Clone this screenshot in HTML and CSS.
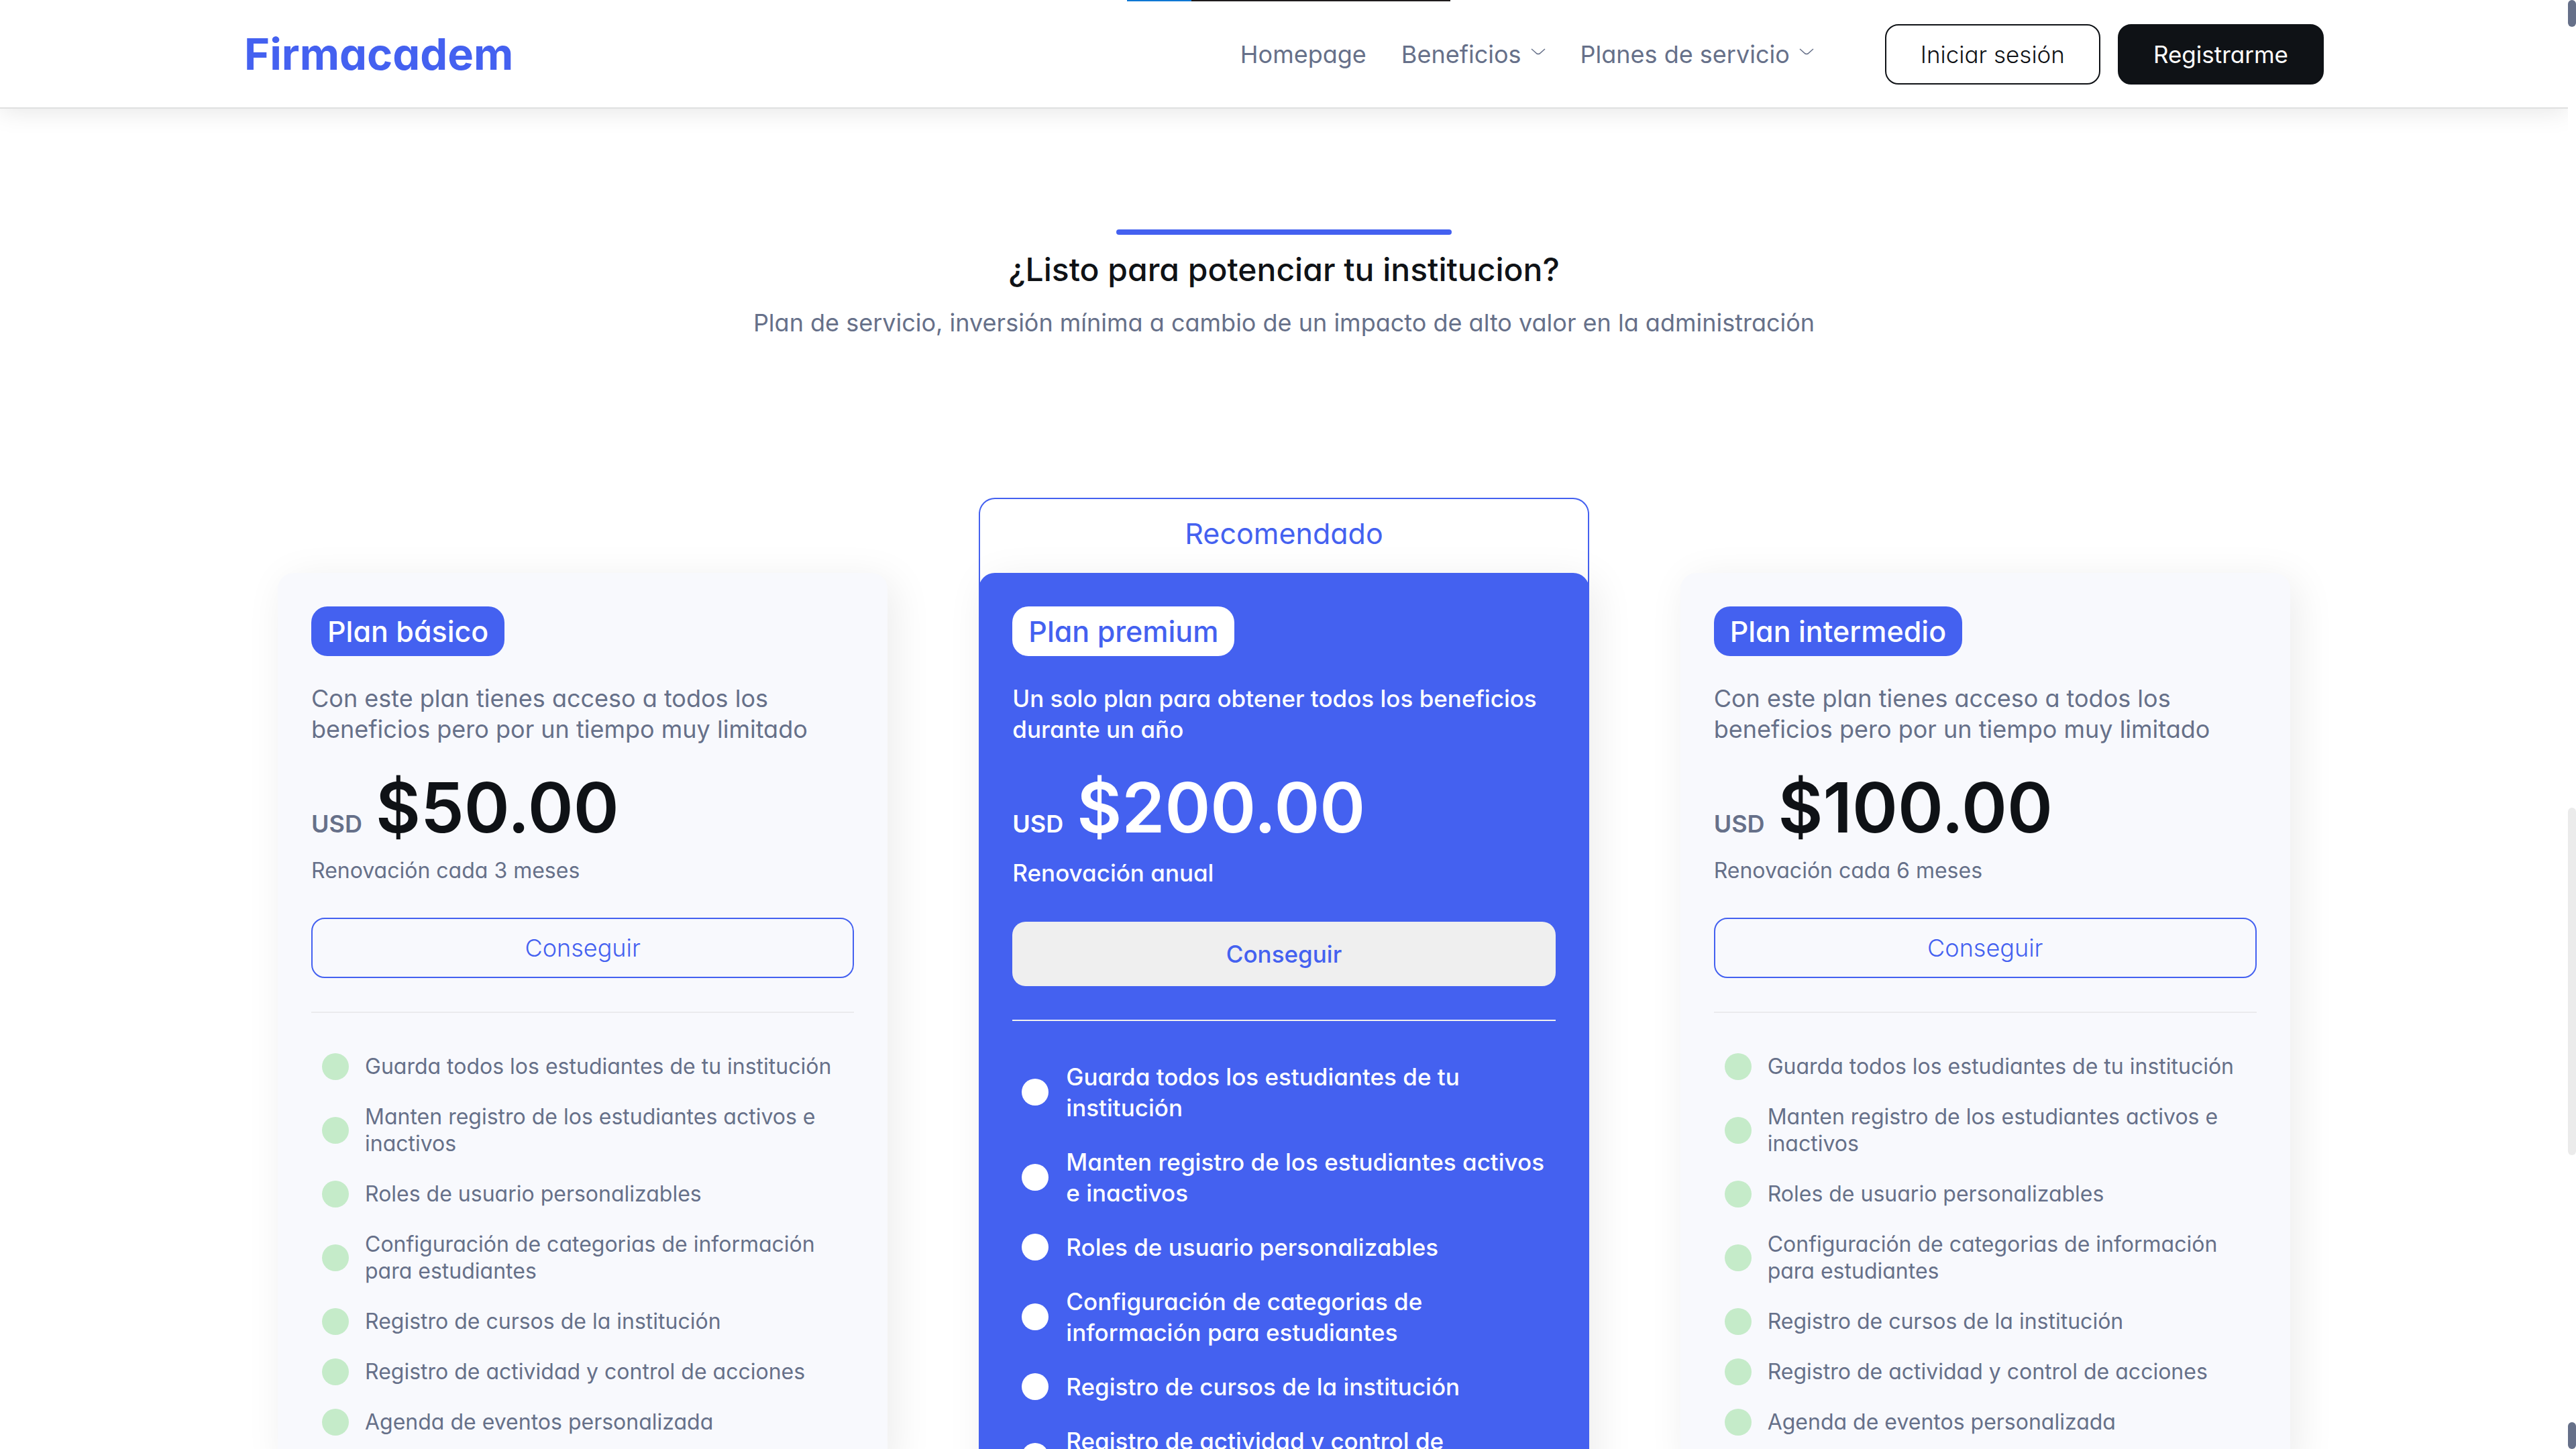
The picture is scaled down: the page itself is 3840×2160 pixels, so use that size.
FILE: index.html
```html
<!DOCTYPE html>
<html lang="es">
<head>
<meta charset="utf-8">
<meta name="viewport" content="width=device-width, initial-scale=1">
<title>Firmacadem</title>
<link rel="stylesheet" href="styles.css">
</head>
<body>
<header class="header">
  <div class="header__inner">
    <a class="logo" href="#">Firmacadem</a>
    <nav class="nav">
      <a class="nav__link" href="#">Homepage</a>
      <a class="nav__link" href="#">Beneficios
        <svg class="chevron" viewBox="0 0 22 10" aria-hidden="true"><path d="M1 1L9 8Q11 9 13 8L21 1"/></svg>
      </a>
      <a class="nav__link" href="#">Planes de servicio
        <svg class="chevron" viewBox="0 0 22 10" aria-hidden="true"><path d="M1 1L9 8Q11 9 13 8L21 1"/></svg>
      </a>
    </nav>
    <div class="actions">
      <button class="btn btn--outline" type="button">Iniciar sesión</button>
      <button class="btn btn--dark" type="button">Registrarme</button>
    </div>
  </div>
</header>

<main class="pricing">
  <div class="intro">
    <span class="intro__bar"></span>
    <h2 class="intro__title">¿Listo para potenciar tu institucion?</h2>
    <p class="intro__text">Plan de servicio, inversión mínima a cambio de un impacto de alto valor en la administración</p>
  </div>

  <div class="plans">
    <article class="plan">
      <h3 class="plan__name">Plan básico</h3>
      <p class="plan__text">Con este plan tienes acceso a todos los beneficios pero por un tiempo muy limitado</p>
      <p class="price"><span class="price__currency">USD</span><span class="price__amount">$50.00</span></p>
      <p class="plan__renewal">Renovación cada 3 meses</p>
      <button class="plan__button" type="button">Conseguir</button>
      <ul class="features">
        <li>Guarda todos los estudiantes de tu institución</li>
        <li>Manten registro de los estudiantes activos e inactivos</li>
        <li>Roles de usuario personalizables</li>
        <li>Configuración de categorias de información para estudiantes</li>
        <li>Registro de cursos de la institución</li>
        <li>Registro de actividad y control de acciones</li>
        <li>Agenda de eventos personalizada</li>
      </ul>
    </article>

    <div class="recommended">
      <p class="recommended__label">Recomendado</p>
      <article class="plan plan--premium">
        <h3 class="plan__name">Plan premium</h3>
        <p class="plan__text">Un solo plan para obtener todos los beneficios durante un año</p>
        <p class="price"><span class="price__currency">USD</span><span class="price__amount">$200.00</span></p>
        <p class="plan__renewal">Renovación anual</p>
        <button class="plan__button" type="button">Conseguir</button>
        <ul class="features">
          <li>Guarda todos los estudiantes de tu institución</li>
          <li>Manten registro de los estudiantes activos e inactivos</li>
          <li>Roles de usuario personalizables</li>
          <li>Configuración de categorias de información para estudiantes</li>
          <li>Registro de cursos de la institución</li>
          <li>Registro de actividad y control de acciones</li>
        </ul>
      </article>
    </div>

    <article class="plan">
      <h3 class="plan__name">Plan intermedio</h3>
      <p class="plan__text">Con este plan tienes acceso a todos los beneficios pero por un tiempo muy limitado</p>
      <p class="price"><span class="price__currency">USD</span><span class="price__amount">$100.00</span></p>
      <p class="plan__renewal">Renovación cada 6 meses</p>
      <button class="plan__button" type="button">Conseguir</button>
      <ul class="features">
        <li>Guarda todos los estudiantes de tu institución</li>
        <li>Manten registro de los estudiantes activos e inactivos</li>
        <li>Roles de usuario personalizables</li>
        <li>Configuración de categorias de información para estudiantes</li>
        <li>Registro de cursos de la institución</li>
        <li>Registro de actividad y control de acciones</li>
        <li>Agenda de eventos personalizada</li>
      </ul>
    </article>
  </div>
</main>

<div class="progress" aria-hidden="true"><span class="progress__value"></span></div>
<div class="scrollbar" aria-hidden="true">
  <span class="scrollbar__button"></span>
  <span class="scrollbar__before"></span>
  <span class="scrollbar__thumb"></span>
  <span class="scrollbar__after"></span>
  <span class="scrollbar__button"></span>
</div>
</body>
</html>
```
FILE: styles.css
```css
:root {
  --blue: #4461f0;
  --slate: #667089;
  --ink: #0f1216;
  --bar: 12px;
}

* { box-sizing: border-box; margin: 0; padding: 0; }

body {
  height: 100vh;
  overflow: hidden;
  padding-right: var(--bar);
  background: #fff;
  color: var(--slate);
  font-family: Inter, "Open Sans", sans-serif;
  font-feature-settings: "cv11";
  font-size: 36px;
  line-height: 46px;
}

button { font: inherit; font-feature-settings: inherit; cursor: pointer; }
a { color: inherit; text-decoration: none; }

/* Header */
.header {
  position: relative;
  padding: 0 40px;
  background: #fff;
  border-bottom: 2px solid #dfe0e0;
  box-shadow: 0 4px 36px rgba(0, 0, 0, .1);
}
.header__inner {
  display: flex;
  align-items: center;
  max-width: 3100px;
  height: 162px;
  margin: 0 auto -2px;
}
.logo {
  margin-right: auto;
  color: var(--blue);
  font-size: 65px;
  font-weight: 700;
  line-height: 80px;
}
.nav { display: flex; gap: 52px; margin-right: 106px; }
.nav__link { display: flex; align-items: center; gap: 14px; }
.chevron {
  width: 22px;
  height: 10px;
  margin-bottom: 8px;
  fill: none;
  stroke: var(--slate);
  stroke-width: 1.5;
}
.actions { display: flex; gap: 26px; }
.btn {
  height: 90px;
  padding: 0 51px;
  border: 2px solid var(--ink);
  border-radius: 20px;
  font-size: 35px;
}
.btn--outline { background: #fff; color: var(--ink); font-weight: 300; }
.btn--dark { background: var(--ink); color: #fff; }

/* Intro */
.intro {
  display: flex;
  flex-direction: column;
  align-items: center;
  padding: 180px 40px 0;
  text-align: center;
}
.intro__bar { width: 500px; height: 8px; border-radius: 4px; background: var(--blue); }
.intro__title {
  margin-top: 22px;
  color: var(--ink);
  font-size: 48px;
  font-weight: 500;
  line-height: 60px;
}
.intro__text { margin-top: 26px; }

/* Plans */
.plans {
  display: grid;
  grid-template-columns: repeat(3, 1fr);
  align-items: start;
  gap: 136px;
  max-width: 3000px;
  margin: 238px auto 0;
}
.plan {
  margin-top: 112px;
  padding: 50px;
  border-radius: 24px;
  background: #f8f9fd;
  box-shadow: 10px 10px 60px rgba(0, 0, 0, .08);
}
.plan__name {
  width: fit-content;
  padding: 12px 24px;
  border-radius: 24px;
  background: var(--blue);
  color: #fff;
  font-size: 43px;
  font-weight: 500;
  line-height: 50px;
}
.plan__text { margin-top: 40px; }
.price {
  display: flex;
  align-items: baseline;
  gap: 20px;
  margin-top: 44px;
}
.price__currency { font-weight: 600; }
.price__amount { color: var(--ink); font-size: 103px; font-weight: 600; line-height: 100px; }
.plan__renewal { margin-top: 24px; font-size: 32px; line-height: 40px; }
.plan__button {
  display: block;
  width: 100%;
  height: 90px;
  margin-top: 50px;
  border: 2px solid var(--blue);
  border-radius: 20px;
  background: transparent;
  color: var(--blue);
  font-weight: 300;
}

.features {
  display: flex;
  flex-direction: column;
  gap: 35px;
  margin-top: 50px;
  padding: 60px 0 0 16px;
  border-top: 2px solid #ebebee;
  list-style: none;
  font-size: 32px;
  line-height: 40px;
}
.features li { display: flex; align-items: center; gap: 24px; }
.features li::before {
  content: "";
  flex: none;
  width: 40px;
  height: 40px;
  border-radius: 50%;
  background: #c5ebc9;
}

/* Recommended plan */
.recommended {
  border: 2px solid var(--blue);
  border-bottom: 0;
  border-radius: 24px 24px 0 0;
}
.recommended__label {
  padding: 26px 0 34px;
  color: var(--blue);
  font-size: 43px;
  line-height: 50px;
  text-align: center;
}
.plan--premium {
  margin: 0 -2px;
  background: var(--blue);
  color: #fff;
  font-size: 35px;
  font-weight: 500;
}
.plan--premium .plan__name { background: #fff; color: var(--blue); }
.plan--premium .price__currency { font-size: 36px; }
.plan--premium .price__amount { color: #fff; }
.plan--premium .plan__renewal { font-size: 35px; line-height: 46px; }
.plan--premium .plan__button { height: 96px; border: 0; background: #efefef; font-weight: 500; }
.plan--premium .features { padding-right: 10px; padding-left: 14px; border-color: #efefef; font-size: 35px; line-height: 46px; }
.plan--premium .features li { gap: 26px; }
.plan--premium .features li::before { background: #fff; }

/* Strip over the top edge */
.progress {
  position: fixed;
  top: 0;
  left: 50%;
  width: 482px;
  height: 2px;
  margin-left: -240px;
  background: #1f1b1c;
}
.progress__value { display: block; width: 20%; height: 100%; background: #0f78d4; }

/* Scroll bar */
.scrollbar {
  position: fixed;
  inset: 0 0 0 auto;
  display: flex;
  flex-direction: column;
  width: var(--bar);
  background: #fff;
}
.scrollbar__button { height: 40px; border-radius: 6px; background: var(--slate); }
.scrollbar__before { flex: 1164; }
.scrollbar__thumb { flex: 518; border-radius: 6px; background: #ebebeb; }
.scrollbar__after { flex: 398; }
```
